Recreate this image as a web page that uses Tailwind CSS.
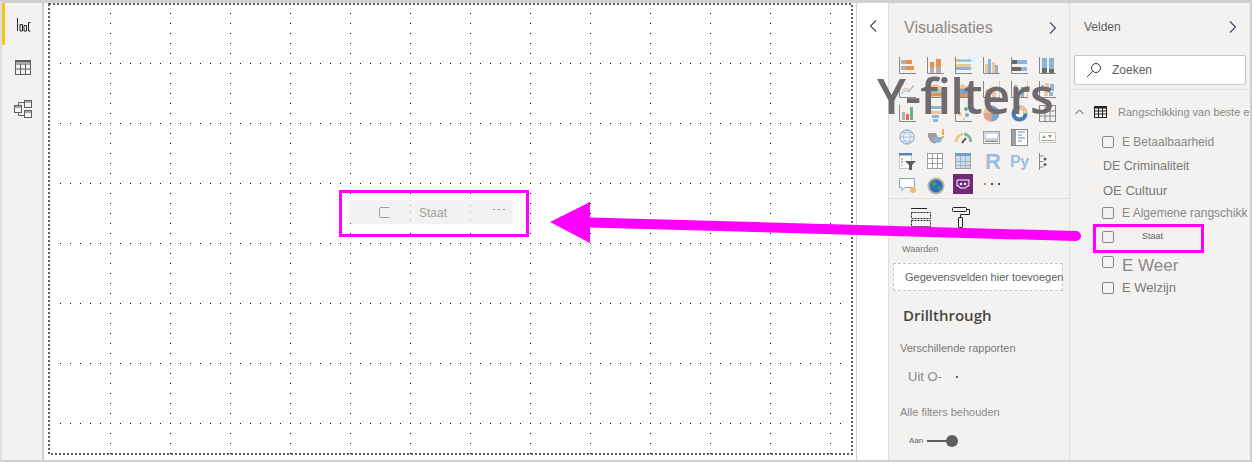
<!DOCTYPE html>
<html lang="nl">
<head>
<meta charset="utf-8">
<script src="https://cdn.jsdelivr.net/npm/@tailwindcss/browser@4"></script>
</head>
<body class="m-0 bg-white">
<div class="relative w-[1252px] h-[462px] overflow-hidden bg-white font-['Liberation_Sans',sans-serif] text-[#605e5c]">
  <div class="flex h-full border-t-[3px] border-b-2 border-r-2 border-l-2 border-t-[#d2d0ce] border-b-[#d2d0ce] border-r-[#d2d0ce] border-l-[#e1dfdd]">
    <!-- left rail -->
    <div class="relative w-[42px] shrink-0 bg-[#f3f2f1] border-r-2 border-[#d2d0ce] flex flex-col items-center">
      <div class="absolute left-0 top-0 w-[3px] h-[42px] bg-[#f2c811]"></div>
      <svg class="mt-[15px] ml-[3px]" width="14" height="14" viewBox="0 0 14 14" fill="none" stroke="#252423" stroke-width="1"><path d="M.5 0v13M3 6.500h2.500v6.500H3zM7 7.500h2.500v5.500H7zM13.500 4.500H11.500v8.500h2"/></svg>
      <svg class="mt-[28px] ml-[2px]" width="16" height="16" viewBox="0 0 16 16" fill="none" stroke="#605e5c" stroke-width="1"><rect x=".5" y=".5" width="15" height="14"/><path d="M.5 4h15M.5 9h15M5.500 4v10.500M10.500 4v10.500" /><path d="M.5 1.500h15" stroke-width="2"/></svg>
      <svg class="mt-[24px] ml-[2px]" width="18" height="18" viewBox="0 0 18 18" fill="none" stroke="#605e5c" stroke-width="1"><rect x="10.500" y=".5" width="7" height="7"/><rect x="10.500" y="10.500" width="7" height="7"/><rect x=".5" y="5.500" width="7" height="7"/><path d="M10.500 2.500h-6v3M4.500 12.500v3h6M10.500 2h7M10.500 12h7M.5 7h7"/></svg>
    </div>
    <!-- canvas -->
    <div class="relative w-[812px] shrink-0 bg-white">
      <svg class="absolute inset-0" width="812" height="457">
        <defs>
          <pattern id="rows" x="16" y="0" width="10" height="60" patternUnits="userSpaceOnUse"><rect x="0" y="0" width="1" height="1" fill="#000"/></pattern>
          <pattern id="cols" x="66" y="10" width="60" height="10" patternUnits="userSpaceOnUse"><rect x="0" y="0" width="1" height="1" fill="#000"/></pattern>
        </defs>
        <rect x="8" y="60" width="798" height="390" fill="url(#rows)"/>
        <rect x="8" y="4" width="798" height="448" fill="url(#cols)"/>
        <rect x="5" y="1" width="803" height="450" fill="none" stroke="#605e5c" stroke-width="2" stroke-dasharray="2 2"/>
      </svg>
      <!-- visual -->
      <div class="absolute left-[305px] top-[197px] w-[164px] h-[24px] rounded-sm bg-[#f3f2f1] flex items-center">
        <svg class="ml-[30px] mt-[1px]" width="11" height="11" viewBox="0 0 11 11" fill="none" stroke="#a19f9d"><path d="M10.500 .5H1.500l-1 1v8l1 1h9"/></svg>
        <span class="ml-[29px] mt-[2px] text-[12px] leading-none text-[#a19f9d]">Staat</span>
        <span class="ml-auto mr-[8px] -mt-[6px] flex gap-[3px]"><i class="w-[2px] h-px bg-[#8a8886]"></i><i class="w-[2px] h-px bg-[#8a8886]"></i><i class="w-[2px] h-px bg-[#8a8886]"></i></span>
        <i class="absolute left-[61px] top-[5px] w-px h-px bg-[#a19f9d]"></i><i class="absolute left-[61px] top-[12px] w-px h-px bg-[#a19f9d]"></i><i class="absolute left-[61px] top-[19px] w-px h-px bg-[#a19f9d]"></i>
        <i class="absolute left-[121px] top-[5px] w-px h-px bg-[#a19f9d]"></i><i class="absolute left-[121px] top-[12px] w-px h-px bg-[#a19f9d]"></i><i class="absolute left-[121px] top-[19px] w-px h-px bg-[#a19f9d]"></i>
      </div>
    </div>
    <!-- collapsed filters -->
    <div class="w-[32px] shrink-0 bg-white border-l border-[#d2d0ce] flex justify-center">
      <svg class="mt-[17px]" width="8" height="12" viewBox="0 0 8 12" fill="none" stroke="#3b4a5c" stroke-width="1.100"><path d="M7 .5 1.500 6 7 11.500"/></svg>
    </div>
    <!-- visualisations -->
    <div class="w-[182px] shrink-0 bg-[#f3f2f1] border-l border-[#e1dfdd] border-r border-r-[#e1dfdd] flex flex-col overflow-hidden">
      <div class="flex items-center justify-between pl-[15px] pr-[12px] pt-[14px] h-[36px]">
        <span class="text-[16px] leading-none text-[#8a8886]">Visualisaties</span>
        <svg width="8" height="12" viewBox="0 0 8 12" fill="none" stroke="#3b4a5c" stroke-width="1.100"><path d="M1 .5 6.500 6 1 11.500"/></svg>
      </div>
      <div class="grid grid-cols-[repeat(6,28px)] auto-rows-[24px] pl-[10px] pt-[18px] h-[160px] border-b border-[#e1dfdd]">
        <!-- row 1 -->
        <svg width="17" height="17" viewBox="0 0 17 17"><path d="M.5 0v16.500H17" fill="none" stroke="#8a8886"/><rect x="2" y="3" width="7" height="4" fill="#b3b0ad"/><rect x="7" y="3" width="6" height="4" fill="#e8914a"/><rect x="2" y="9" width="7" height="4" fill="#b3b0ad"/><rect x="7" y="9" width="8" height="4" fill="#e8914a"/></svg>
        <svg width="17" height="17" viewBox="0 0 17 17"><path d="M.5 0v16.500H17" fill="none" stroke="#8a8886"/><rect x="3" y="5" width="4" height="6" fill="#e8914a"/><rect x="3" y="11" width="4" height="5" fill="#b3b0ad"/><rect x="9" y="2" width="5" height="8" fill="#e8914a"/><rect x="9" y="10" width="5" height="6" fill="#b3b0ad"/></svg>
        <svg width="17" height="17" viewBox="0 0 17 17"><path d="M.5 0v16.500H17" fill="none" stroke="#8a8886"/><rect x="1" y="2" width="15" height="3" fill="#efc88f"/><rect x="1" y="5" width="15" height="2" fill="#f3f2f1"/><rect x="1" y="7" width="15" height="3" fill="#efc88f"/><rect x="1" y="10" width="15" height="3" fill="#8fb4d9"/><rect x="1" y="3" width="15" height="1" fill="#8fb4d9"/></svg>
        <svg width="17" height="17" viewBox="0 0 17 17"><path d="M.5 0v16.500H17" fill="none" stroke="#8a8886"/><rect x="2" y="7" width="3" height="9" fill="#efc88f"/><rect x="5" y="2" width="3" height="14" fill="#8fb4d9"/><rect x="9" y="5" width="3" height="11" fill="#efc88f"/><rect x="12" y="8" width="3" height="8" fill="#8fb4d9"/></svg>
        <svg width="17" height="17" viewBox="0 0 17 17"><path d="M.5 0v16.500H17" fill="none" stroke="#8a8886"/><rect x="1" y="3" width="5" height="4" fill="#6b6966"/><rect x="6" y="3" width="10" height="4" fill="#8fb4d9"/><rect x="1" y="10" width="9" height="4" fill="#6b6966"/><rect x="10" y="10" width="6" height="4" fill="#8fb4d9"/></svg>
        <svg width="17" height="17" viewBox="0 0 17 17"><path d="M.5 0v16.500H17" fill="none" stroke="#8a8886"/><rect x="3" y="1" width="5" height="10" fill="#8fb4d9"/><rect x="3" y="11" width="5" height="5" fill="#6b6966"/><rect x="10" y="1" width="5" height="11" fill="#8fb4d9"/><rect x="10" y="12" width="5" height="4" fill="#6b6966"/></svg>
        <!-- row 2 -->
        <svg width="17" height="17" viewBox="0 0 17 17"><path d="M.5 0v16.500H17" fill="none" stroke="#8a8886"/><path d="M2 13 7 9l3 2 5-6" fill="none" stroke="#8fb4d9"/><path d="M2 10 7 7l3 2 5-5" fill="none" stroke="#e8b48a"/></svg>
        <svg width="17" height="17" viewBox="0 0 17 17"><path d="M.5 0v16.500H17" fill="none" stroke="#8a8886"/><path d="M1 6 8 3l8 3v10H1z" fill="#efc88f"/><path d="M1 9l7-2 8 3v3H1z" fill="#a9c4de"/><rect x="1" y="12" width="15" height="3" fill="#e8914a"/></svg>
        <svg width="17" height="17" viewBox="0 0 17 17"><path d="M.5 0v16.500H17" fill="none" stroke="#8a8886"/><path d="M1 8 7 3l4 3 5-4v14H1z" fill="#efc88f"/><path d="M1 12l6-5 4 3 5-3v9H1z" fill="#7ea6cc"/><rect x="1" y="13" width="15" height="3" fill="#e8914a"/></svg>
        <svg width="17" height="17" viewBox="0 0 17 17"><path d="M.5 0v16.500H17V0" fill="none" stroke="#e8914a"/><path d="M.5 0v16.500H17" fill="none" stroke="#8a8886"/><rect x="3" y="8" width="4" height="8" fill="#f3c6a5"/><rect x="9" y="6" width="4" height="10" fill="#f3c6a5"/><path d="M2 11 7 8l3 3 5-4" fill="none" stroke="#e8914a"/></svg>
        <svg width="17" height="17" viewBox="0 0 17 17"><path d="M.5 0v16.500H17V0" fill="none" stroke="#e8914a"/><path d="M.5 0v16.500H17" fill="none" stroke="#8a8886"/><rect x="3" y="4" width="3" height="12" fill="#8fb4d9"/><rect x="10" y="6" width="3" height="10" fill="#8fb4d9"/><path d="M2 11 7 8l3 3 5-4" fill="none" stroke="#e8914a"/></svg>
        <svg width="17" height="17" viewBox="0 0 17 17"><path d="M.5 0v16.500H17" fill="none" stroke="#8a8886"/><rect x="2" y="4" width="3" height="5" fill="#8fb4d9"/><rect x="6" y="2" width="4" height="6" fill="#efc88f"/><rect x="11" y="3" width="4" height="7" fill="#8fb4d9"/><rect x="5" y="10" width="4" height="5" fill="#efc88f"/><rect x="10" y="11" width="4" height="4" fill="#8fb4d9"/></svg>
        <!-- row 3 -->
        <svg width="17" height="17" viewBox="0 0 17 17"><path d="M.5 0v16.500H17" fill="none" stroke="#8a8886"/><rect x="3" y="7" width="3" height="8" fill="#b3b0ad"/><rect x="7" y="9" width="3" height="6" fill="#e06c5a"/><rect x="11" y="2" width="3" height="13" fill="#6fae7f"/></svg>
        <svg width="17" height="17" viewBox="0 0 17 17"><rect y="1" width="17" height="3" fill="#8fb4d9"/><rect x="3" y="6" width="11" height="3" fill="#efc88f"/><rect x="5" y="10" width="7" height="3" fill="#8fb4d9"/><rect x="6" y="14" width="5" height="3" fill="#8fb4d9"/></svg>
        <svg width="17" height="17" viewBox="0 0 17 17"><path d="M.5 0v16.500H17" fill="none" stroke="#8a8886"/><circle cx="11" cy="4" r="2" fill="#6fae7f"/><circle cx="5" cy="9" r="2" fill="#efc88f"/><circle cx="12" cy="10" r="2" fill="#7ea6cc"/><circle cx="9" cy="14" r="1.500" fill="#efc88f"/></svg>
        <svg width="17" height="17" viewBox="0 0 17 17"><circle cx="8.500" cy="8.500" r="8" fill="#7ea6cc"/><path d="M8.500 8.500V.5a8 8 0 0 0-8 8z" fill="#efc88f"/><path d="M8.500 8.500H.5a8 8 0 0 0 8 8z" fill="#e8a08a"/></svg>
        <svg width="17" height="17" viewBox="0 0 17 17" fill="none" stroke-width="4"><circle cx="8.500" cy="8.500" r="6" stroke="#3f7cb8"/><path d="M8.500 2.500a6 6 0 0 1 6 6" stroke="#efc88f"/></svg>
        <svg width="17" height="17" viewBox="0 0 17 17" fill="none" stroke="#8a8886"><rect x=".5" y=".5" width="16" height="16"/><path d="M.5 6h16M.5 11h16M6 .5v16M11 .5v16"/></svg>
        <!-- row 4 -->
        <svg width="16" height="16" viewBox="0 0 17 17" fill="none"><circle cx="8.500" cy="8.500" r="7.500" stroke="#6d9fc9"/><path d="M1 8.500h15M3 4h11M3 13h11M8.500 1c-5 5-5 10 0 15M8.500 1c5 5 5 10 0 15" stroke="#8fb4d9" stroke-width=".8"/></svg>
        <svg width="18" height="17" viewBox="0 0 18 17"><path d="M1 4h8l2 5-3 6-4-2-3-5z" fill="#a19f9d"/><path d="M6 8h10l-2 5-6 1z" fill="#8fb4d9"/><rect x="15" y="0" width="2" height="6" fill="#e8b04a"/><rect x="15" y="7" width="2" height="2" fill="#e8b04a"/></svg>
        <svg width="17" height="17" viewBox="0 0 17 17" fill="none"><path d="M1.500 13A7 7 0 0 1 8 5" stroke="#efc88f" stroke-width="3"/><path d="M9 5a7 7 0 0 1 6.500 8" stroke="#8ab89a" stroke-width="3"/><path d="M7 14l4-5" stroke="#3b3a39" stroke-width="1.500"/></svg>
        <svg width="17" height="17" viewBox="0 0 17 17"><rect x=".5" y="2.500" width="16" height="12" fill="#fff" stroke="#a19f9d"/><rect x="2" y="4" width="13" height="6" fill="#fff" stroke="#8fb4d9"/><rect x="2" y="11.500" width="13" height="1.500" fill="#8a8886"/></svg>
        <svg width="17" height="17" viewBox="0 0 17 17"><rect x=".5" y=".5" width="16" height="16" fill="#fff" stroke="#8a8886"/><rect x="1" y="1" width="4" height="15" fill="#a19f9d"/><path d="M7 3h7M7 6h4M7 9h7M7 12h4" stroke="#8fb4d9" stroke-width="1.500"/></svg>
        <svg width="17" height="17" viewBox="0 0 17 17"><rect x=".5" y="3.500" width="16" height="10" fill="#fff" stroke="#c8c6c4"/><path d="M3 9l2-3 2 3z" fill="#6fae7f"/><path d="M9 6h4l-2 3z" fill="#e06c5a"/><rect x="2" y="11" width="13" height="1" fill="#a19f9d"/></svg>
        <!-- row 5 -->
        <svg width="17" height="18" viewBox="0 0 17 18"><rect x=".5" y=".5" width="12" height="15" fill="#fff" stroke="#c8c6c4"/><rect width="13" height="2.500" fill="#4d88c4"/><rect x="2" y="5" width="2" height="2" fill="#efb07a"/><rect x="2" y="8" width="2" height="2" fill="#8fb4d9"/><rect x="2" y="11" width="2" height="2" fill="#efc88f"/><path d="M6 8h11l-4 4v5h-3v-5z" fill="#605e5c"/></svg>
        <svg width="16" height="16" viewBox="0 0 16 16" fill="#fff" stroke="#a19f9d"><rect x=".5" y=".5" width="15" height="15"/><path d="M.5 5.500h15M.5 10.500h15M5.500 .5v15M10.500 .5v15" fill="none"/></svg>
        <svg width="16" height="16" viewBox="0 0 16 16"><rect x=".5" y=".5" width="15" height="15" fill="#cfdcea" stroke="#a19f9d"/><rect width="16" height="3" fill="#6d9fd0"/><path d="M.5 8.500h15M.5 12.500h15M5.500 3v12M10.500 3v12" fill="none" stroke="#a3b3c6"/></svg>
        <span class="pl-[2px] text-[22px] font-bold leading-[18px] text-[#9dbde0]">R</span>
        <span class="-ml-[1px] text-[16px] font-bold leading-[17px] text-[#9dbde0] tracking-tight">Py</span>
        <svg width="17" height="17" viewBox="0 0 17 17" fill="none" stroke="#8a8886"><path d="M.5 0v17M.5 3h4M.5 8.500h4M.5 14h4"/><circle cx="6" cy="6" r="1.500" fill="#605e5c" stroke="none"/><circle cx="6" cy="11.500" r="1.500" fill="#605e5c" stroke="none"/></svg>
        <!-- row 6 -->
        <svg width="18" height="18" viewBox="0 0 18 18"><path d="M.5 1.500h15v9H6l-3 3v-3H.5z" fill="#fff" stroke="#7ea6cc"/><circle cx="14" cy="13" r="3" fill="#efc06a"/></svg>
        <svg width="18" height="18" viewBox="0 0 18 18"><circle cx="9" cy="9" r="8.500" fill="#b3b0ad"/><circle cx="9" cy="9" r="6.500" fill="#2f6fb5"/><path d="M4 6l4-2 2 3-3 3zM10 10l4-1-2 5z" fill="#3fa05a"/></svg>
        <div class="-mt-[3px] -ml-[2px] w-[20px] h-[20px] bg-[#742774] flex items-center justify-center"><svg width="14" height="11" viewBox="0 0 14 11"><path d="M1 1h12v6h-2l-1 2H4L3 7H1z" fill="none" stroke="#fff"/><circle cx="5" cy="5" r="1.300" fill="#fff"/><circle cx="9" cy="5" r="1.300" fill="#fff"/></svg></div>
        <div class="flex gap-[5px] pt-[6px] pl-[1px] h-[8px]"><i class="w-[2px] h-[2px] bg-[#c87a3a]"></i><i class="w-[2px] h-[2px] bg-[#3b4a5c]"></i><i class="w-[2px] h-[2px] bg-[#3b4a5c]"></i></div>
      </div>
      <div class="flex items-start pl-[21px] pt-[9px] gap-[21px] h-[41px]">
        <svg width="21" height="21" viewBox="0 0 21 21" fill="none" stroke="#252423"><path d="M1 .5h16"/><path d="M1.500 4.500h19v6h-19zM1.500 12.500h19v6h-19z" stroke-dasharray="2 1"/></svg>
        <svg class="-mt-[1px]" width="18" height="22" viewBox="0 0 18 22" fill="none" stroke="#252423"><rect x=".5" y=".5" width="14" height="4" rx="1"/><path d="M14.500 2.500h3v5H8.500v3"/><rect x="6.500" y="10.500" width="4" height="10" rx=".5"/></svg>
      </div>
      <div class="pl-[13px] pt-[2px] text-[9px] leading-[14px] text-[#797775]">Waarden</div>
      <div class="mx-[4px] mt-[7px] h-[28px] shrink-0 w-[170px] bg-white border border-dashed border-[#c8c6c4] pl-[11px] flex items-center text-[11px] text-[#605e5c] whitespace-nowrap">Gegevensvelden hier toevoegen</div>
      <div class="pl-[14px] mt-[14px] text-[15px] font-semibold font-['Open_Sans',sans-serif] leading-[20px] text-[#484644]">Drillthrough</div>
      <div class="pl-[11px] mt-[15px] text-[11px] leading-[16px] text-[#797775]">Verschillende rapporten</div>
      <div class="pl-[19px] mt-[13px] flex items-center text-[13px] leading-[16px] text-[#8a8886]"><span>Uit O-</span><i class="ml-[14px] w-[2px] h-[2px] bg-[#605e5c]"></i></div>
      <div class="pl-[11px] mt-[19px] text-[11px] leading-[16px] text-[#8a8886]">Alle filters behouden</div>
      <div class="pl-[20px] mt-[15px] flex items-center"><span class="text-[8px] leading-none text-[#605e5c] w-[18px]">Aan</span><div class="w-[20px] h-[2px] bg-[#605e5c]"></div><div class="-ml-[1px] w-[12px] h-[12px] rounded-full bg-[#605e5c]"></div></div>
    </div>
    <!-- fields -->
    <div class="flex-1 min-w-0 bg-[#f3f2f1] flex flex-col overflow-hidden">
      <div class="flex items-center justify-between pl-[14px] pr-[13px] pt-[14px] h-[34px]">
        <span class="text-[12px] leading-none text-[#605e5c]">Velden</span>
        <svg width="8" height="12" viewBox="0 0 8 12" fill="none" stroke="#3b4a5c" stroke-width="1.100"><path d="M1 .5 6.500 6 1 11.500"/></svg>
      </div>
      <div class="mx-[4px] mt-[18px] h-[30px] shrink-0 bg-white border border-[#c8c6c4] rounded-[2px] flex items-center pl-[11px]">
        <svg width="16" height="16" viewBox="0 0 16 16" fill="none" stroke="#3b3a39"><circle cx="10" cy="6" r="4.500"/><path d="M6.800 9.200 1 15" stroke="#3b4a5c"/></svg>
        <span class="ml-[10px] text-[12px] text-[#605e5c]">Zoeken</span>
      </div>
      <div class="mt-[4px] h-px bg-[#e1dfdd]"></div>
      <div class="mt-[14px] flex items-center h-[16px] whitespace-nowrap pl-[5px]">
        <svg class="shrink-0" width="9" height="6" viewBox="0 0 9 6" fill="none" stroke="#3b4a5c"><path d="M.5 5 4.500 1l4 4"/></svg>
        <svg class="ml-[10px] shrink-0" width="13" height="12" viewBox="0 0 13 12" fill="none" stroke="#252423"><rect x=".5" y=".5" width="12" height="11"/><path d="M.5 1.500h12" stroke-width="2"/><path d="M.5 5h12M.5 8h12M4.500 2v9M8.500 2v9"/></svg>
        <span class="ml-[11px] shrink-0 text-[11px] text-[#8a8886]">Rangschikking van beste en</span>
      </div>
      <div class="mt-[15px] pl-[32px] h-[14px] flex items-center text-[12px] whitespace-nowrap text-[#8a8886]"><i class="w-[12px] h-[12px] border border-[#8a8886] rounded-[2px]"></i><span class="ml-[8px]">E Betaalbaarheid</span></div>
      <div class="mt-[10px] pl-[33px] h-[14px] flex items-center text-[12.500px] whitespace-nowrap text-[#797775]">DE Criminaliteit</div>
      <div class="mt-[11px] pl-[33px] h-[14px] flex items-center text-[13px] whitespace-nowrap text-[#797775]">OE Cultuur</div>
      <div class="mt-[8px] pl-[32px] h-[14px] flex items-center text-[12px] whitespace-nowrap text-[#8a8886]"><i class="shrink-0 w-[12px] h-[12px] border border-[#8a8886] rounded-[2px]"></i><span class="ml-[8px]">E Algemene rangschikk</span></div>
      <div class="mt-[10px] pl-[32px] h-[14px] flex items-center whitespace-nowrap text-[#605e5c]"><i class="w-[12px] h-[12px] border border-[#8a8886] rounded-[2px]"></i><span class="ml-[28px] -mt-[1px] text-[9px]">Staat</span></div>
      <div class="mt-[13px] pl-[32px] h-[16px] flex items-center text-[17px] leading-none whitespace-nowrap text-[#8a8886]"><i class="-mt-[6px] w-[12px] h-[12px] border border-[#8a8886] rounded-[2px]"></i><span class="ml-[8px]">E Weer</span></div>
      <div class="mt-[8px] pl-[32px] h-[14px] flex items-center text-[13px] whitespace-nowrap text-[#797775]"><i class="w-[12px] h-[12px] border border-[#8a8886] rounded-[2px]"></i><span class="ml-[8px]">E Welzijn</span></div>
    </div>
  </div>
  <!-- overlays -->
  <div class="absolute left-[877px] top-[65px] text-[49px] leading-[60px] tracking-[-0.7px] text-[#6f6a6f] font-['Open_Sans',sans-serif] font-semibold whitespace-nowrap">Y-filters</div>
  <div class="absolute left-[339px] top-[190px] w-[190px] h-[47px] border-[3px] border-[#ff00ff]"></div>
  <div class="absolute left-[1093px] top-[224px] w-[111px] h-[29px] border-[3px] border-[#ff00ff]"></div>
  <svg class="absolute left-0 top-0 pointer-events-none" width="1252" height="462"><path d="M590 217.500 1076 231a5 5 0 0 1 0 10L590 227.500 590 243 550 222 590 202z" fill="#ff00ff"/></svg>
</div>
</body>
</html>
